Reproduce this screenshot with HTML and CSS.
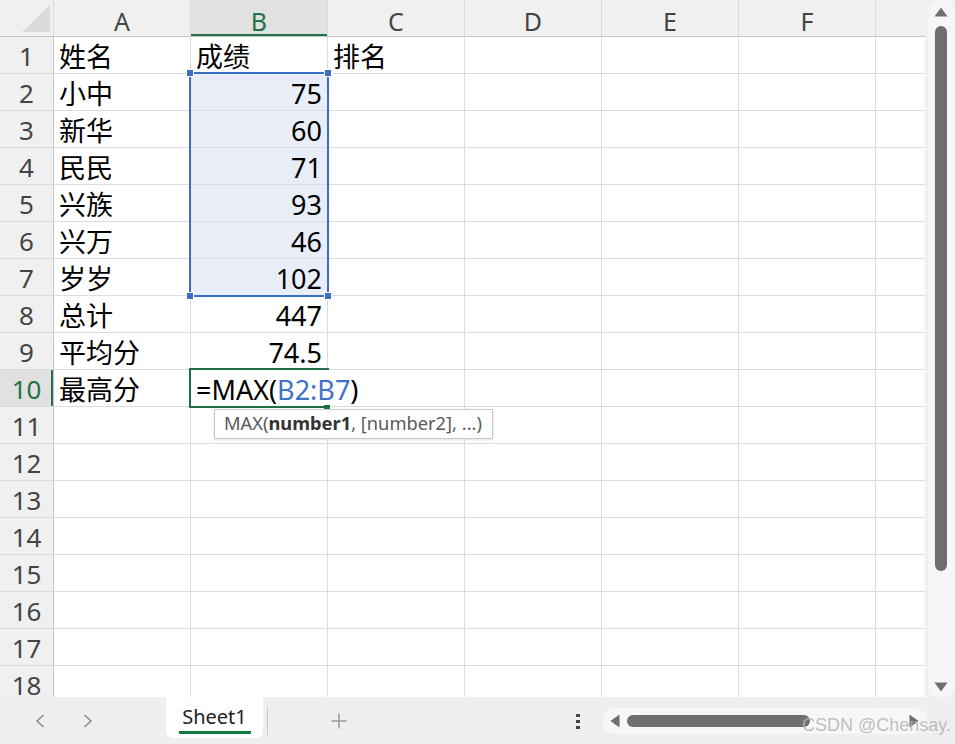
FILE: index.html
```html
<!DOCTYPE html>
<html lang="zh-CN">
<head>
<meta charset="utf-8">
<title>Sheet1</title>
<link rel="stylesheet" href="styles.css">
</head>
<body>
<div class="app">
  <div class="main">
    <div class="sheet">
      <div class="grid">
        <div class="h corner"><div class="tri"></div></div>
        <div class="h">A</div><div class="h on">B</div><div class="h">C</div><div class="h">D</div><div class="h">E</div><div class="h">F</div><div class="h"></div>

        <div class="r">1</div><div class="c">姓名</div><div class="c">成绩</div><div class="c">排名</div><div class="c"></div><div class="c"></div><div class="c"></div><div class="c"></div>
        <div class="r">2</div><div class="c">小中</div><div class="c num sel">75</div><div class="c"></div><div class="c"></div><div class="c"></div><div class="c"></div><div class="c"></div>
        <div class="r">3</div><div class="c">新华</div><div class="c num sel">60</div><div class="c"></div><div class="c"></div><div class="c"></div><div class="c"></div><div class="c"></div>
        <div class="r">4</div><div class="c">民民</div><div class="c num sel">71</div><div class="c"></div><div class="c"></div><div class="c"></div><div class="c"></div><div class="c"></div>
        <div class="r">5</div><div class="c">兴族</div><div class="c num sel">93</div><div class="c"></div><div class="c"></div><div class="c"></div><div class="c"></div><div class="c"></div>
        <div class="r">6</div><div class="c">兴万</div><div class="c num sel">46</div><div class="c"></div><div class="c"></div><div class="c"></div><div class="c"></div><div class="c"></div>
        <div class="r">7</div><div class="c">岁岁</div><div class="c num sel">102</div><div class="c"></div><div class="c"></div><div class="c"></div><div class="c"></div><div class="c"></div>
        <div class="r">8</div><div class="c">总计</div><div class="c num">447</div><div class="c"></div><div class="c"></div><div class="c"></div><div class="c"></div><div class="c"></div>
        <div class="r">9</div><div class="c">平均分</div><div class="c num">74.5</div><div class="c"></div><div class="c"></div><div class="c"></div><div class="c"></div><div class="c"></div>
        <div class="r on">10</div><div class="c">最高分</div><div class="c edit">=MAX(<span class="ref">B2:B7</span>)</div><div class="c"></div><div class="c"></div><div class="c"></div><div class="c"></div><div class="c"></div>
        <div class="r">11</div><div class="c"></div><div class="c"></div><div class="c"></div><div class="c"></div><div class="c"></div><div class="c"></div><div class="c"></div>
        <div class="r">12</div><div class="c"></div><div class="c"></div><div class="c"></div><div class="c"></div><div class="c"></div><div class="c"></div><div class="c"></div>
        <div class="r">13</div><div class="c"></div><div class="c"></div><div class="c"></div><div class="c"></div><div class="c"></div><div class="c"></div><div class="c"></div>
        <div class="r">14</div><div class="c"></div><div class="c"></div><div class="c"></div><div class="c"></div><div class="c"></div><div class="c"></div><div class="c"></div>
        <div class="r">15</div><div class="c"></div><div class="c"></div><div class="c"></div><div class="c"></div><div class="c"></div><div class="c"></div><div class="c"></div>
        <div class="r">16</div><div class="c"></div><div class="c"></div><div class="c"></div><div class="c"></div><div class="c"></div><div class="c"></div><div class="c"></div>
        <div class="r">17</div><div class="c"></div><div class="c"></div><div class="c"></div><div class="c"></div><div class="c"></div><div class="c"></div><div class="c"></div>
        <div class="r">18</div><div class="c"></div><div class="c"></div><div class="c"></div><div class="c"></div><div class="c"></div><div class="c"></div><div class="c"></div>
      </div>

      <div class="selbox">
        <span class="hd tl"></span><span class="hd tr"></span><span class="hd bl"></span><span class="hd br"></span>
      </div>
      <div class="active"><span class="ahd"></span></div>
      <div class="tip">MAX(<b>number1</b>, [number2], ...)</div>
    </div>

    <div class="vscroll">
      <div class="vtrack">
        <svg class="vup" width="14" height="10" viewBox="0 0 14 10"><polygon points="7,0.5 13.5,9.5 0.5,9.5" fill="#6e6e6e"/></svg>
        <div class="vthumb"></div>
        <div class="vspace"></div>
        <svg class="vdown" width="14" height="10" viewBox="0 0 14 10"><polygon points="0.5,0.5 13.5,0.5 7,9.5" fill="#6e6e6e"/></svg>
      </div>
    </div>
  </div>

  <div class="bar">
    <div class="nav">
      <svg width="10" height="14" viewBox="0 0 10 14"><path d="M8.5 1 L2 7 L8.5 13" fill="none" stroke="#8c8c8c" stroke-width="1.6"/></svg>
      <svg width="10" height="14" viewBox="0 0 10 14"><path d="M1.5 1 L8 7 L1.5 13" fill="none" stroke="#8c8c8c" stroke-width="1.6"/></svg>
    </div>
    <div class="tab">
      <span class="tabname">Sheet1</span>
      <span class="tabline"></span>
    </div>
    <div class="sep"></div>
    <svg class="add" width="18" height="18" viewBox="0 0 18 18"><path d="M9 1.5v15M1.5 9h15" stroke="#9a9a9a" stroke-width="1.5"/></svg>
    <svg class="more" width="6" height="18" viewBox="0 0 6 18"><rect x="1" y="2" width="4" height="3" fill="#444"/><rect x="1" y="8" width="4" height="3" fill="#444"/><rect x="1" y="14" width="4" height="3" fill="#444"/></svg>
    <div class="hscroll">
      <svg width="10" height="14" viewBox="0 0 10 14"><polygon points="9.5,0.5 9.5,13.5 0.5,7" fill="#6e6e6e"/></svg>
      <div class="hthumb"></div>
      <div class="hspace"></div>
      <svg width="10" height="14" viewBox="0 0 10 14"><polygon points="0.5,0.5 0.5,13.5 9.5,7" fill="#6e6e6e"/></svg>
    </div>
    <div class="mark">CSDN @Chensay.</div>
  </div>
</div>
</body>
</html>
```

FILE: styles.css
```css
* { box-sizing: border-box; }
html, body { margin: 0; padding: 0; background: #ffffff; }
body { font-family: "Noto Sans", "Noto Sans CJK SC", sans-serif; }

.app {
  width: 955px;
  height: 744px;
  display: flex;
  flex-direction: column;
  overflow: hidden;
}

.main {
  height: 697px;
  display: flex;
  flex-direction: row;
}

.sheet {
  width: 925px;
  height: 697px;
  position: relative;
  overflow: hidden;
  background: #ffffff;
}

.grid {
  display: grid;
  grid-template-columns: 54px repeat(6, 137px) 50px;
  grid-template-rows: repeat(19, 37px);
}

.c, .h, .r {
  border-right: 1px solid #dcdcdc;
  border-bottom: 1px solid #dcdcdc;
  display: flex;
  align-items: flex-end;
  white-space: nowrap;
  font-size: 27px;
  line-height: 27px;
  color: #000;
}

.c {
  padding: 0 5px 3px 5px;
}

.num { justify-content: flex-end; }
.sel { background: #e8edf7; }

.edit {
  border-right: none;
  overflow: visible;
  position: relative;
  z-index: 1;
}
.ref { color: #3f72c9; }

.h {
  background: #f0f0f0;
  border-bottom-color: #c6c6c6;
  border-right-color: #dadada;
  justify-content: center;
  font-size: 25px;
  line-height: 25px;
  padding-bottom: 2px;
  color: #444;
}
.h.on {
  background: #e1e1e1;
  color: #217346;
  box-shadow: inset 0 -2px 0 #217346;
}

.corner {
  justify-content: flex-end;
  align-items: flex-end;
  padding: 0 3px 4px 0;
}
.tri {
  width: 28px;
  height: 27px;
  background: #dadada;
  clip-path: polygon(100% 0, 100% 100%, 0 100%);
}

.r {
  background: #f0f0f0;
  border-right-color: #c6c6c6;
  border-bottom-color: #dcdcdc;
  justify-content: center;
  font-size: 26px;
  line-height: 26px;
  padding-bottom: 4px;
  color: #444;
}
.r.on {
  background: #e1e1e1;
  color: #217346;
  box-shadow: inset -2px 0 0 #217346;
}

/* selection overlay for B2:B7 */
.selbox {
  position: absolute;
  left: 189px;
  top: 72px;
  width: 140px;
  height: 225px;
  border: 2px solid #3a6fc8;
  pointer-events: none;
}
.hd {
  position: absolute;
  width: 6px;
  height: 6px;
  background: #3a6fc8;
  border: 1px solid #ffffff;
  box-sizing: content-box;
}
.hd.tl { left: -5px; top: -5px; }
.hd.tr { right: -5px; top: -5px; }
.hd.bl { left: -5px; bottom: -5px; }
.hd.br { right: -5px; bottom: -5px; }

/* active editing cell B10 */
.active {
  position: absolute;
  left: 189px;
  top: 368px;
  width: 140px;
  height: 40px;
  border-top: 2px solid #1e7145;
  border-left: 2px solid #1e7145;
  border-bottom: 2px solid #1e7145;
  z-index: 2;
  pointer-events: none;
}
.ahd {
  position: absolute;
  right: -1px;
  bottom: -4px;
  width: 6px;
  height: 5px;
  background: #1e7145;
}

/* function tooltip */
.tip {
  position: absolute;
  left: 214px;
  top: 409px;
  width: 279px;
  height: 30px;
  background: #ffffff;
  border: 1px solid #c8c8c8;
  box-shadow: 0 1px 2px rgba(0, 0, 0, 0.12);
  font-size: 18.3px;
  line-height: 26px;
  padding-left: 9px;
  color: #595959;
  white-space: nowrap;
  z-index: 3;
}
.tip b { color: #333; font-weight: 700; }

/* vertical scrollbar */
.vscroll {
  width: 30px;
  height: 697px;
  background: #f0f0f0;
  padding-left: 3px;
}
.vtrack {
  height: 697px;
  background: #f6f6f6;
  border-radius: 9px;
  display: flex;
  flex-direction: column;
  align-items: center;
  padding: 7px 0 5px 0;
}
.vup { display: block; margin-left: -1px; }
.vthumb {
  width: 12px;
  height: 545px;
  margin-top: 9px;
  margin-left: -1px;
  background: #6e6e6e;
  border-radius: 6px;
}
.vspace { flex: 1; }
.vdown { display: block; margin-left: -1px; }

/* bottom bar */
.bar {
  height: 47px;
  background: #efefef;
  display: flex;
  align-items: center;
  position: relative;
}
.nav {
  width: 166px;
  display: flex;
  align-items: center;
  gap: 38px;
  padding-left: 35px;
}
.nav svg { display: block; }

.tab {
  align-self: flex-start;
  width: 97px;
  height: 41px;
  background: #ffffff;
  border-radius: 0 0 7px 7px;
  display: flex;
  flex-direction: column;
  align-items: center;
  padding-top: 8px;
}
.tabname {
  font-size: 20px;
  line-height: 24px;
  color: #222;
}
.tabline {
  width: 72px;
  height: 3px;
  margin-top: 2px;
  background: #107c41;
}

.sep {
  width: 1px;
  height: 28px;
  margin-left: 4px;
  background: #c8c8c8;
}
.add { display: block; margin-left: 62px; }
.more { display: block; margin-left: 227px; }

.hscroll {
  margin-left: 21px;
  width: 325px;
  height: 26px;
  border-radius: 13px;
  background: #f7f7f7;
  display: flex;
  align-items: center;
  padding: 0 8px 0 8px;
}
.hscroll svg { display: block; }
.hthumb {
  width: 183px;
  height: 12px;
  margin-left: 7px;
  background: #6e6e6e;
  border-radius: 6px;
}
.hspace { flex: 1; }

.mark {
  position: absolute;
  right: 4px;
  bottom: 9px;
  font-family: "Liberation Sans", Arial, sans-serif;
  font-size: 18px;
  line-height: 20px;
  color: rgba(180, 180, 180, 0.85);
  white-space: nowrap;
}
```
